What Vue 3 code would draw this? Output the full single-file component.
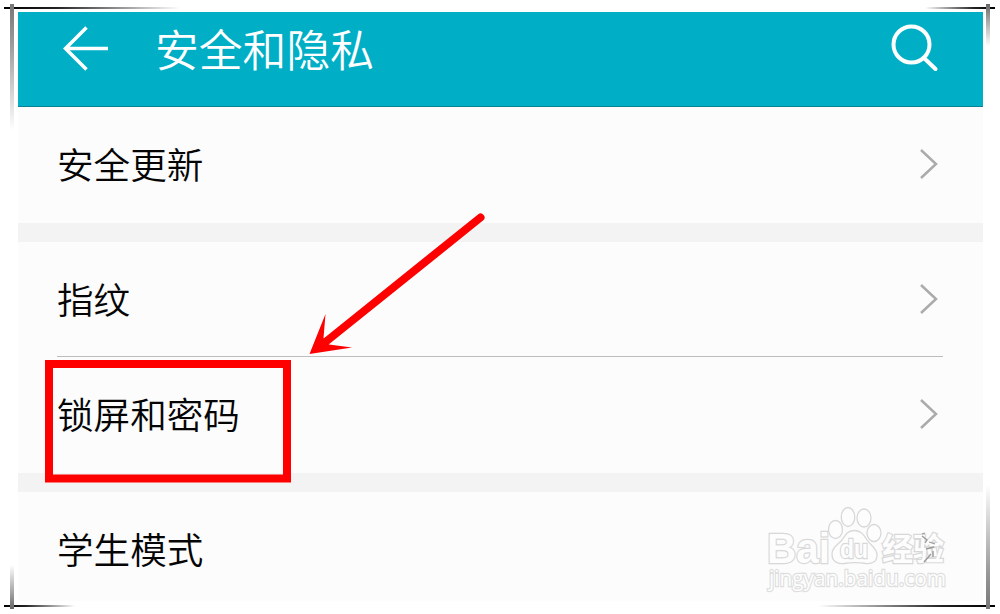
<template>
  <div class="page">
    <div class="panel">
      <header class="header">
        <svg class="back" width="48" height="48" viewBox="0 0 48 48">
          <path d="M24.5 3.500 L3.500 24.500 L24.500 45.500 M3.500 24.500 H46" />
        </svg>
        <h1>安全和隐私</h1>
        <svg class="search" width="50" height="50" viewBox="0 0 50 50">
          <circle cx="22.5" cy="22.5" r="18" />
          <path d="M35.500 36.500 L46.500 47" />
        </svg>
      </header>

      <section v-for="(group, index) in groups" :key="index" class="group">
        <div v-for="item in group" :key="item.label" class="row" :class="item.size">
          <span>{{ item.label }}</span>
          <svg v-if="item.arrow" class="chevron" width="20" height="34" viewBox="0 0 20 34">
            <path d="M2 3 L17 17 L2 31" />
          </svg>
        </div>
      </section>
    </div>

    <svg class="overlay" width="1000" height="614" viewBox="0 0 1000 614">
      <rect class="mark-box" x="49" y="364" width="238" height="114.500" />
      <path class="mark-line" d="M480.500 217.500 L323 344" />
      <path class="mark-head" d="M309.500 354 L325.500 314 L323.500 338 L329 344.500 L352 347.500 Z" />

      <g class="logo">
        <text class="brand" x="767" y="562.500" textLength="63" lengthAdjust="spacingAndGlyphs">Bai</text>
        <ellipse cx="835.500" cy="529.500" rx="7" ry="9" />
        <ellipse cx="848" cy="517" rx="6.800" ry="9.500" />
        <ellipse cx="864" cy="518" rx="7" ry="9" />
        <ellipse cx="874" cy="533" rx="7" ry="8.500" />
        <path d="M854.500 530.500 C861 530.500 864 535 867 540 C871 546 877 548 877 555 C877 562 872 564 866 563.500 C859 562.500 851 562.500 844 563.500 C837 564.500 832 561 832 554 C832 547 838 545 842 540 C846 534 848 530.500 854.500 530.500 Z" />
        <text class="du" x="840" y="558" textLength="28" lengthAdjust="spacingAndGlyphs">du</text>
        <text class="cn" x="882" y="560">经验</text>
        <path class="faint" d="M922 536 l5 4 l-2 3 M926 549 l8 -2 M924 562 l7 -8 M933 551 v6 M922 534 l3 -1 M929 542 l6 2" />
        <text class="site" x="769" y="586" textLength="177" lengthAdjust="spacingAndGlyphs">jingyan.baidu.com</text>
      </g>
    </svg>

    <i class="line h top-left"></i>
    <i class="line v top-left"></i>
    <i class="line h top-right"></i>
    <i class="line v top-right"></i>
    <i class="line h bottom-left"></i>
    <i class="line v bottom-left"></i>
    <i class="line h bottom-right"></i>
    <i class="line v bottom-right"></i>
  </div>
</template>

<script setup>
const groups = [
  [{ label: '安全更新', size: 'first', arrow: true }],
  [
    { label: '指纹', size: 'finger', arrow: true },
    { label: '锁屏和密码', size: 'lock', arrow: true }
  ],
  [{ label: '学生模式', size: 'last', arrow: false }]
]
</script>

<style>
body {
  margin: 0;
  background: #fff;
}
</style>

<style scoped>
.page {
  position: relative;
  width: 1000px;
  height: 614px;
  box-sizing: border-box;
  padding: 12px 17px 0 18px;
  overflow: hidden;
  background: #fff;
  font-family: "Noto Sans CJK SC", sans-serif;
}

.panel {
  display: flex;
  flex-direction: column;
  height: 589px;
  background: #f3f3f3;
}

.header {
  display: flex;
  align-items: flex-start;
  box-sizing: border-box;
  height: 95px;
  padding-left: 44px;
  padding-right: 44px;
  background: #00afc6;
  border-bottom: 1px solid #078193;
}

.back,
.search {
  fill: none;
  stroke: #fff;
  stroke-width: 3.5;
}

.back {
  margin-top: 12px;
}

h1 {
  margin: 6px auto 0 45px;
  color: #fff;
  font-size: 43.8px;
  font-weight: 350;
  line-height: 60px;
}

.search {
  margin-top: 10px;
  stroke-width: 4;
  stroke-linecap: round;
}

.group {
  background: #fcfcfc;
  margin-bottom: 19px;
}

.group:last-child {
  margin-bottom: 0;
}

.row {
  display: flex;
  align-items: center;
  justify-content: space-between;
  box-sizing: border-box;
  margin: 0 40px 0 39px;
  padding-right: 4px;
  padding-bottom: 2px;
  color: #050505;
  font-size: 36.6px;
  font-weight: 350;
  line-height: 54px;
}

.first {
  height: 116px;
}

.finger {
  height: 115px;
  padding-bottom: 0;
  border-bottom: 1px solid #bdbdbd;
}

.lock {
  height: 116px;
}

.last {
  height: 109px;
  padding-top: 6px;
}

.chevron {
  fill: none;
  stroke: #ababab;
  stroke-width: 2.5;
}

.overlay {
  position: absolute;
  left: 0;
  top: 0;
}

.mark-box,
.mark-line {
  fill: none;
  stroke: #fe0000;
  stroke-width: 8;
}

.mark-line {
  stroke-linecap: round;
}

.mark-head {
  fill: #fe0000;
}

.logo {
  fill: #fdfdfd;
  stroke: #d8d8d8;
  stroke-width: 1.3;
}

.logo text {
  paint-order: stroke;
  stroke-width: 2.4;
}

.logo .faint {
  fill: none;
  stroke: #999;
}

.brand,
.du {
  font-family: "Liberation Sans", sans-serif;
  font-weight: bold;
}

.brand {
  font-size: 42px;
}

.du {
  font-size: 25px;
}

.cn {
  font-size: 31px;
  font-weight: 700;
}

.logo .site {
  font-family: "Open Sans", sans-serif;
  font-size: 22px;
  stroke: #dedede;
}

.line {
  position: absolute;
}

.h {
  height: 2px;
}

.v {
  width: 4px;
}

.h.top-left {
  left: 4px;
  top: 7px;
  width: 176px;
  background: linear-gradient(to right, #000, #222 30%, transparent);
}

.v.top-left {
  left: 10px;
  top: 4px;
  height: 126px;
  background: linear-gradient(to bottom, #777, #999 30%, transparent);
}

.h.top-right {
  right: 5px;
  top: 7px;
  width: 70px;
  background: linear-gradient(to left, #000, #222 30%, transparent);
}

.v.top-right {
  left: 986px;
  top: 4px;
  height: 42px;
  background: linear-gradient(to bottom, #666, #999 30%, transparent);
}

.h.bottom-left {
  left: 4px;
  top: 605px;
  width: 71px;
  background: linear-gradient(to right, #000, #222 30%, transparent);
}

.v.bottom-left {
  left: 10px;
  top: 565px;
  height: 44px;
  background: linear-gradient(to top, #666, #999 30%, transparent);
}

.h.bottom-right {
  right: 5px;
  top: 605px;
  width: 177px;
  background: linear-gradient(to left, #000, #222 30%, transparent);
}

.v.bottom-right {
  left: 986px;
  top: 485px;
  height: 124px;
  background: linear-gradient(to top, #777, #999 30%, transparent);
}
</style>
